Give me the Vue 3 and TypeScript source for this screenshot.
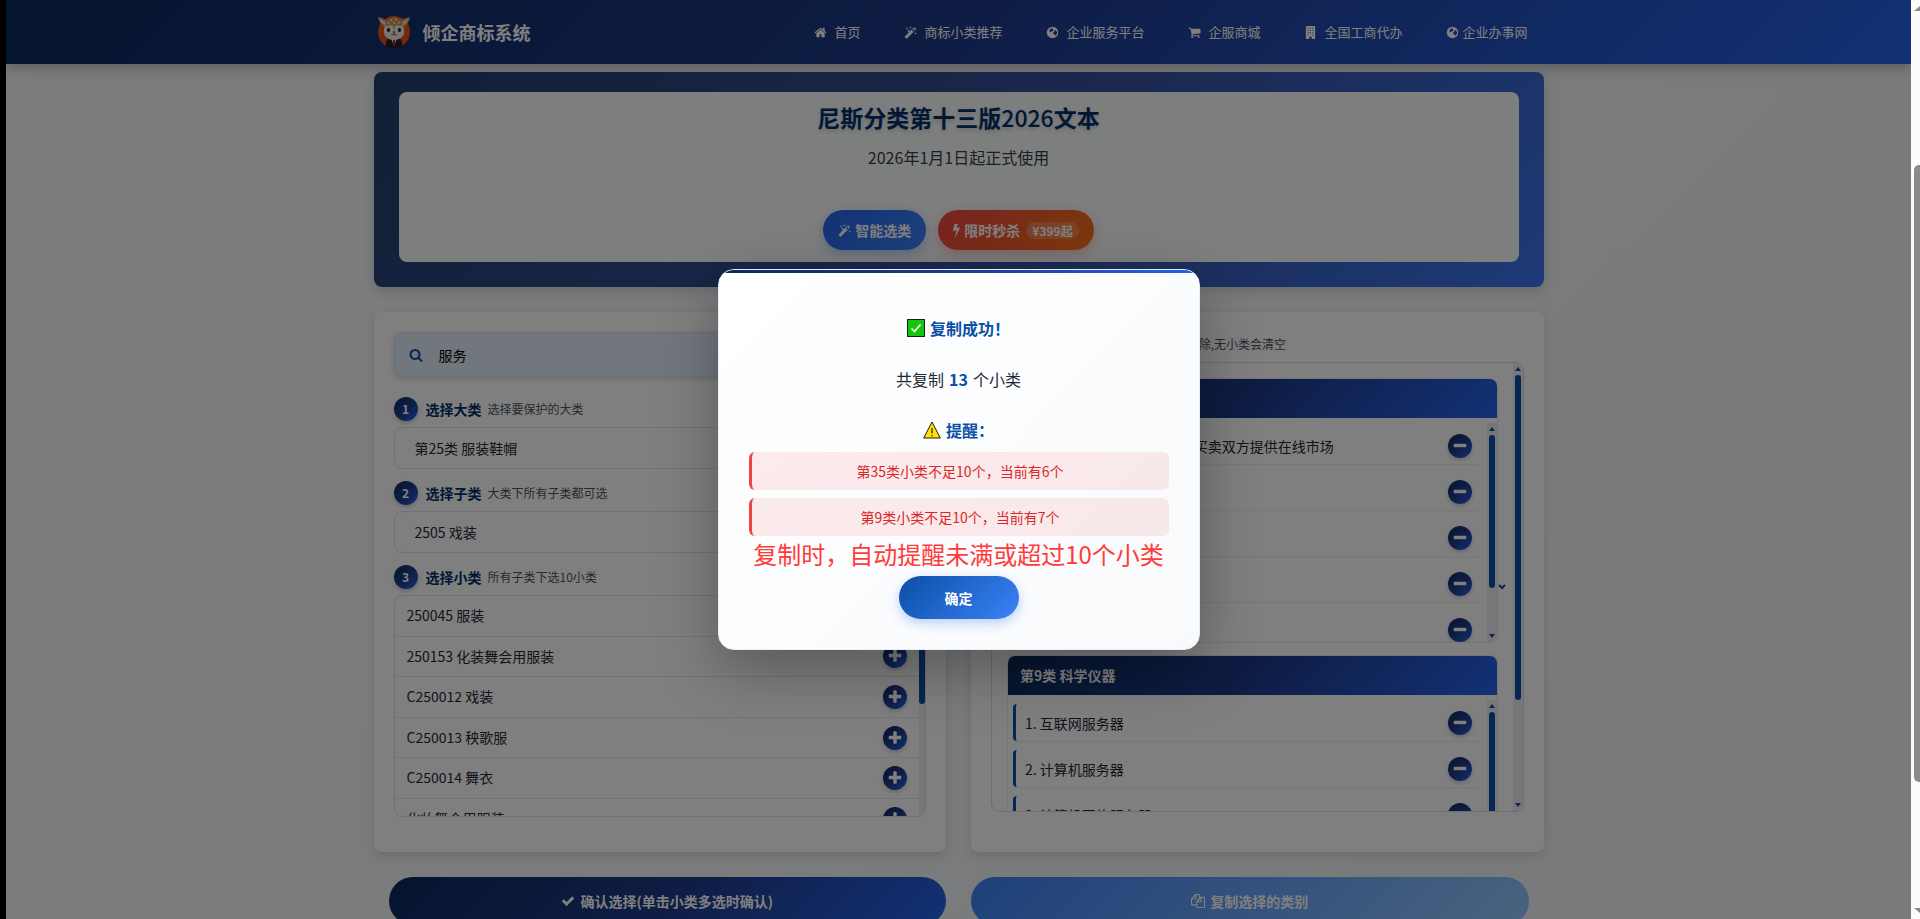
<script setup lang="ts">
import { ref } from 'vue'

interface Glyph {
  box: string
  d: string
}

const glyphs: Record<string, Glyph> = {
  home: {
    box: '0 0 1792 1792',
    d: 'M1472 992v480q0 26-19 45t-45 19h-384v-384h-256v384h-384q-26 0-45-19t-19-45v-480q0-1 .5-3t.5-3l575-474 575 474q1 2 1 6zm223-69l-62 74q-8 9-21 11h-3q-13 0-21-7l-692-577-692 577q-12 8-24 7-13-2-21-11l-62-74q-8-10-7-23.5t11-21.5l719-599q32-26 76-26t76 26l244 204v-195q0-14 9-23t23-9h192q14 0 23 9t9 23v408l219 182q10 8 11 21.5t-7 23.5z',
  },
  wand: {
    box: '0 0 14 14',
    d: 'M.9 11.200L10.400 1.700Q10.900 1.300 11.400 1.700L12.700 3Q13.100 3.500 12.700 4L3.200 13.500Q2.700 13.900 2.200 13.500L.9 12.200Q.5 11.700 .9 11.200zM8.600 5L9.700 6.100L11.700 4.100L10.400 2.800zM3.200 1l.4 1.100 1.100.4-1.100.4-.4 1.100-.4-1.100-1.100-.4 1.100-.4zM7 0l.4 1 1 .4-1 .4-.4 1-.4-1-1-.4 1-.4zM12.600 6.600l.4 1 1 .4-1 .4-.4 1-.4-1-1-.4 1-.4zM5 3.600l.5 1.300 1.300.4-1.300.5-.5 1.300-.5-1.300-1.300-.5 1.300-.4z',
  },
  globe: {
    box: '0 0 14 14',
    d: 'M7 .8a6.200 6.200 0 1 1 0 12.400a6.200 6.200 0 0 1 0-12.400zM5.600 2.600L4 4L3.800 5.600L5 6.800L6 6L7.400 5.400L8 4L7.200 2.800zM9.400 4.400L9 6L7.600 7.200L8.400 9L9.800 9.400L10.400 10.400L11.600 8.600L12 6.400L10.800 5.200z',
  },
  cart: {
    box: '0 0 1792 1792',
    d: 'M704 1536q0 52-38 90t-90 38-90-38-38-90 38-90 90-38 90 38 38 90zm896 0q0 52-38 90t-90 38-90-38-38-90 38-90 90-38 90 38 38 90zm128-1088v512q0 24-16.5 42.5t-40.5 21.5l-1044 122q13 60 13 70 0 16-24 64h920q26 0 45 19t19 45-19 45-45 19h-1024q-26 0-45-19t-19-45q0-11 8-31.5t16-36 21.5-40 15.5-29.5l-177-823h-204q-26 0-45-19t-19-45 19-45 45-19h256q16 0 28.5 6.5t19.5 15.5 13 24.5 8 26 5.5 29.5 4.5 26h1201q26 0 45 19t19 45z',
  },
  building: {
    box: '0 0 14 14',
    d: 'M2.5 0H11.5Q12 0 12 .5V13.5Q12 14 11.5 14H8.2V11.6H5.8V14H2.500Q2 14 2 13.500V.5Q2 0 2.500 0zM4 2V3H5V2zM6.500 2V3H7.500V2zM9 2V3H10V2zM4 4.400V5.400H5V4.400zM6.500 4.400V5.400H7.500V4.400zM9 4.400V5.400H10V4.400zM4 6.800V7.800H5V6.800zM6.500 6.800V7.800H7.500V6.800zM9 6.800V7.800H10V6.800zM4 9.200V10.200H5V9.200zM9 9.200V10.200H10V9.200z',
  },
  search: {
    box: '0 0 1792 1792',
    d: 'M1216 832q0-185-131.5-316.5t-316.5-131.5-316.5 131.5-131.5 316.5 131.5 316.5 316.5 131.5 316.5-131.5 131.5-316.5zm512 832q0 52-38 90t-90 38q-54 0-90-38l-343-342q-179 124-399 124-143 0-273.5-55.500t-225-150-150-225-55.500-273.500 55.500-273.500 150-225 225-150 273.500-55.500 273.500 55.500 225 150 150 225 55.500 273.500q0 220-124 399l343 343q37 37 37 90z',
  },
  plus: {
    box: '0 0 1792 1792',
    d: 'M1600 736v192q0 40-28 68t-68 28h-416v416q0 40-28 68t-68 28h-192q-40 0-68-28t-28-68v-416h-416q-40 0-68-28t-28-68v-192q0-40 28-68t68-28h416v-416q0-40 28-68t68-28h192q40 0 68 28t28 68v416h416q40 0 68 28t28 68z',
  },
  minus: {
    box: '0 0 1792 1792',
    d: 'M1600 736v192q0 40-28 68t-68 28h-1216q-40 0-68-28t-28-68v-192q0-40 28-68t68-28h1216q40 0 68 28t28 68z',
  },
  check: {
    box: '0 0 1792 1792',
    d: 'M1671 566q0 40-28 68l-724 724-136 136q-28 28-68 28t-68-28l-136-136-362-362q-28-28-28-68t28-68l136-136q28-28 68-28t68 28l294 295 656-657q28-28 68-28t68 28l136 136q28 28 28 68z',
  },
  bolt: {
    box: '448 0 896 1792',
    d: 'M1333 566q18 20 7 44l-540 1157q-13 25-42 25-4 0-14-2-17-5-25.500-19t-4.500-30l197-808-406 101q-4 1-12 1-18 0-31-11-18-15-13-39l201-825q4-14 16-23t28-9h328q19 0 32 12.500t13 29.500q0 8-5 18l-171 463 396-98q8-2 12-2 19 0 34 15z',
  },
  copy: {
    box: '0 0 16 16',
    d: 'M5.200 0H9.400Q10 0 10 .6V3H15.400Q16 3 16 3.600V15.400Q16 16 15.400 16H6.600Q6 16 6 15.400V13H.6Q0 13 0 12.400V5.200zM5 2L2 5H5zM6.200 1.200V5.600Q6.200 6.200 5.600 6.200H1.200V11.800H6V8.200L8.800 5.200V1.200zM11 5.200L8.200 8.200H11zM12.200 4.200V8.800Q12.200 9.400 11.600 9.400H7.200V14.800H14.800V4.200z',
  },
}

const nav = [
  { icon: 'home', label: '首页' },
  { icon: 'wand', label: '商标小类推荐' },
  { icon: 'globe', label: '企业服务平台' },
  { icon: 'cart', label: '企服商城' },
  { icon: 'building', label: '全国工商代办' },
  { icon: 'globe', label: '企业办事网', tight: true },
]

const keyword = ref('服务')

const steps = [
  { no: 1, title: '选择大类', hint: '选择要保护的大类', value: '第25类 服装鞋帽' },
  { no: 2, title: '选择子类', hint: '大类下所有子类都可选', value: '2505 戏装' },
]

const goods = [
  '250045 服装',
  '250153 化装舞会用服装',
  'C250012 戏装',
  'C250013 秧歌服',
  'C250014 舞衣',
  '化妆舞会用服装',
]

const groups = [
  {
    title: '第35类 广告销售',
    thumb: 'thumb-a',
    items: [
      '通过互联网为商品和服务买卖双方提供在线市场',
      '替他人推销',
      '市场营销',
      '广告宣传',
      '商业管理辅助',
    ],
  },
  {
    title: '第9类 科学仪器',
    thumb: 'thumb-b',
    items: ['互联网服务器', '计算机服务器', '计算机网络服务器'],
  },
]

const warnings = ['第35类小类不足10个，当前有6个', '第9类小类不足10个，当前有7个']
</script>

<template>
  <div class="screen">
    <div class="page">
      <header class="topbar">
        <div class="wrap topbar-inner">
          <div class="brand">
            <svg class="logo" viewBox="0 0 32 32" aria-hidden="true">
              <circle cx="16" cy="16" r="16" fill="#e8501c" />
              <path d="M0 1Q6 2 10 6L7 11Q1 8 0 1zM32 1Q26 2 22 6L25 11Q31 8 32 1z" fill="#d9a06a" />
              <path d="M1.500 3Q5 4 8 7L7 9Q3 7 1.500 3zM30.500 3Q27 4 24 7L25 9Q29 7 30.500 3z" fill="#f8e4d2" />
              <path d="M8 31Q7 24 11 22H21Q25 24 24 31Q16 34 8 31z" fill="#20222c" />
              <path d="M13 22L16 30L19 22z" fill="#fff" />
              <path d="M15 24H17L17.500 28L16 30L14.500 28z" fill="#c8202c" />
              <path d="M16 2Q24 2 25 10Q28 17 24 21Q21 24 16 24Q11 24 8 21Q4 17 7 10Q8 2 16 2z" fill="#f4e9df" />
              <path d="M16 1Q24 2 25 9Q22 11 19 9Q17 9 16 14Q15 9 13 9Q10 11 7 9Q8 2 16 1z" fill="#d39455" />
              <g fill="#fdeed8">
                <circle cx="13" cy="4" r="1" />
                <circle cx="18" cy="3.500" r="1" />
                <circle cx="16" cy="7" r="1" />
                <circle cx="21" cy="6.500" r="1" />
                <circle cx="10.500" cy="7" r="1" />
              </g>
              <ellipse cx="10.500" cy="14" rx="1.600" ry="2" fill="#16161c" />
              <ellipse cx="21.500" cy="14" rx="1.600" ry="2" fill="#16161c" />
              <path d="M14.500 15.500H17.500L16 17.500z" fill="#2a1c1c" />
              <path d="M13.500 18.500Q15 19.500 16 18Q17 19.500 18.500 18.500" fill="none" stroke="#2a1c1c" stroke-width=".8" />
            </svg>
            <span>倾企商标系统</span>
          </div>
          <nav class="nav">
            <a v-for="n in nav" :key="n.label" href="#" :class="{ tight: n.tight }">
              <svg class="nav-icon" :viewBox="glyphs[n.icon].box" aria-hidden="true">
                <path :d="glyphs[n.icon].d" fill-rule="evenodd" />
              </svg>
              {{ n.label }}
            </a>
          </nav>
        </div>
      </header>

      <main class="wrap">
        <section class="banner">
          <div class="banner-inner">
            <h1>尼斯分类第十三版<span>2026</span>文本</h1>
            <p>2026年1月1日起正式使用</p>
            <div class="banner-actions">
              <button type="button" class="pill blue">
                <svg class="pill-icon" :viewBox="glyphs.wand.box" aria-hidden="true">
                  <path :d="glyphs.wand.d" fill-rule="evenodd" />
                </svg>
                智能选类
              </button>
              <button type="button" class="pill red">
                <svg class="bolt-icon" :viewBox="glyphs.bolt.box" aria-hidden="true">
                  <path :d="glyphs.bolt.d" />
                </svg>
                限时秒杀
                <span class="price">¥399起</span>
              </button>
            </div>
          </div>
        </section>

        <div class="columns">
          <section class="card">
            <label class="search">
              <svg class="search-icon" :viewBox="glyphs.search.box" aria-hidden="true">
                <path :d="glyphs.search.d" />
              </svg>
              <input v-model="keyword" type="text" aria-label="搜索" />
            </label>
            <div v-for="s in steps" :key="s.no" class="step">
              <h2 class="step-head">
                <span class="num">{{ s.no }}</span>{{ s.title }}<small>{{ s.hint }}</small>
              </h2>
              <div class="choice">{{ s.value }}</div>
            </div>
            <div class="step">
              <h2 class="step-head">
                <span class="num">3</span>选择小类<small>所有子类下选10小类</small>
              </h2>
              <div class="goods">
                <ul>
                  <li v-for="g in goods" :key="g">
                    <span>{{ g }}</span>
                    <button type="button" class="round" aria-label="添加">
                      <svg :viewBox="glyphs.plus.box" aria-hidden="true"><path :d="glyphs.plus.d" /></svg>
                    </button>
                  </li>
                </ul>
                <div class="goods-bar"><i></i></div>
              </div>
            </div>
          </section>

          <section class="card">
            <h2 class="step-head">
              <span class="num">4</span>已选类别<small>点击小类右侧 [-] 可删除,无小类会清空</small>
            </h2>
            <div class="picked">
              <div class="picked-list">
                <article v-for="g in groups" :key="g.title" class="group">
                  <h3>{{ g.title }}</h3>
                  <div class="group-body">
                    <ol>
                      <li v-for="(t, i) in g.items" :key="t">
                        <span>{{ i + 1 }}. {{ t }}</span>
                        <button type="button" class="round" aria-label="删除">
                          <svg :viewBox="glyphs.minus.box" aria-hidden="true"><path :d="glyphs.minus.d" /></svg>
                        </button>
                      </li>
                    </ol>
                    <div class="bar">
                      <b class="up"></b>
                      <i :class="g.thumb"></i>
                      <b class="down"></b>
                    </div>
                  </div>
                </article>
              </div>
              <svg class="caret" viewBox="0 0 8 6" aria-hidden="true">
                <path d="M1 1L4 4L7 1" fill="none" stroke="#0b4fa6" stroke-width="2" />
              </svg>
              <div class="bar">
                <b class="up"></b>
                <i class="thumb-outer"></i>
                <b class="down"></b>
              </div>
            </div>
          </section>
        </div>

        <div class="footer-actions">
          <button type="button" class="confirm">
            <svg class="action-icon" :viewBox="glyphs.check.box" aria-hidden="true"><path :d="glyphs.check.d" /></svg>
            确认选择(单击小类多选时确认)
          </button>
          <button type="button" class="copy">
            <svg class="action-icon" :viewBox="glyphs.copy.box" aria-hidden="true">
              <path :d="glyphs.copy.d" fill-rule="evenodd" />
            </svg>
            复制选择的类别
          </button>
        </div>
      </main>

      <div class="overlay">
        <div class="modal" role="dialog" aria-modal="true" aria-labelledby="modal-title">
          <h2 id="modal-title" class="modal-line strong">
            <svg class="emoji" viewBox="0 0 18 18" aria-hidden="true">
              <rect x=".5" y=".5" width="17" height="17" fill="#16c60c" stroke="#1c1c1c" />
              <path d="M4.500 9.500L7.500 12.500L13.500 5.500" fill="none" stroke="#fff" stroke-width="1.600" />
            </svg>
            复制成功！
          </h2>
          <p class="modal-line">共复制 <strong>13</strong> 个小类</p>
          <h3 class="modal-line strong remind">
            <svg class="emoji" viewBox="0 0 18 18" aria-hidden="true">
              <path d="M9 1L17.300 17H.7z" fill="#fde300" stroke="#1c1c1c" stroke-linejoin="round" />
              <path d="M9 7V12.500M9 14V15.200" stroke="#1c1c1c" stroke-width="1.200" />
            </svg>
            提醒：
          </h3>
          <ul class="warnings">
            <li v-for="w in warnings" :key="w">{{ w }}</li>
          </ul>
          <p class="note">复制时，自动提醒未满或超过10个小类</p>
          <button type="button" class="ok">确定</button>
        </div>
      </div>
    </div>

    <div class="window-bar" aria-hidden="true">
      <b class="win-up"></b>
      <i></i>
      <b class="win-down"></b>
    </div>
  </div>
</template>

<style>
body {
  background: #000;
  overflow: hidden;
}
</style>

<style scoped>
* {
  box-sizing: border-box;
  margin: 0;
  padding: 0;
}
ul,
ol {
  list-style: none;
}
button,
input {
  font-family: inherit;
  border: 0;
}
svg {
  fill: currentColor;
  flex: none;
}
.screen {
  --brand: linear-gradient(135deg, #0a2a5c 0%, #1e3a8a 50%, #2563eb 100%);
  --accent: #0b4fa6;
  display: flex;
  height: 100vh;
  padding-left: 6px;
  background: #000;
  font-family: "Noto Sans CJK SC", "Noto Sans", sans-serif;
  font-size: 14px;
  line-height: 20px;
  color: #1f2937;
}
.page {
  position: relative;
  flex: 1;
  min-width: 0;
  overflow: hidden;
  background: linear-gradient(135deg, #f8f9fb, #f1f4f8);
}
.wrap {
  max-width: 1170px;
  margin: 0 auto;
}
.topbar {
  background: var(--brand);
  box-shadow: 0 4px 12px rgba(0, 0, 0, 0.25);
}
.topbar-inner {
  display: flex;
  align-items: center;
  justify-content: space-between;
  height: 64px;
}
.brand {
  display: flex;
  align-items: center;
  gap: 13px;
  padding-left: 4px;
  color: #fff;
  font-size: 18px;
  font-weight: 700;
}
.logo {
  width: 32px;
  height: 32px;
}
.nav {
  display: flex;
  gap: 12px;
}
.nav a {
  display: flex;
  align-items: center;
  gap: 7px;
  padding: 0 16px;
  color: #fff;
  font-size: 13px;
  text-decoration: none;
  white-space: nowrap;
}
.nav a.tight {
  gap: 3px;
}
.nav-icon {
  width: 13px;
  height: 13px;
}
.banner {
  margin-top: 8px;
  padding: 20px 25px 25px;
  border-radius: 8px;
  background: linear-gradient(135deg, #223f6c, #354e96 50%, #3b73ed);
  box-shadow: 0 4px 12px rgba(0, 0, 0, 0.15);
}
.banner-inner {
  padding: 8px 20px 12px;
  border-radius: 8px;
  background: #fbfcfd;
  text-align: center;
}
h1 {
  font-size: 23px;
  line-height: 34px;
  color: #00306a;
  text-shadow: 0 2px 4px rgba(0, 0, 0, 0.2);
}
h1 span {
  font-weight: 500;
}
.banner p {
  margin-top: 10px;
  font-size: 16px;
  line-height: 26px;
  color: #374151;
}
.banner-actions {
  display: flex;
  justify-content: center;
  gap: 12px;
  margin-top: 40px;
}
.pill {
  display: flex;
  align-items: center;
  gap: 4px;
  height: 40px;
  padding: 0 15px;
  border-radius: 20px;
  color: #fff;
  font-size: 14px;
  font-weight: 700;
}
.blue {
  background: linear-gradient(135deg, #2563eb, #3b82f6);
  box-shadow: 0 4px 12px rgba(37, 99, 235, 0.3);
}
.red {
  background: linear-gradient(135deg, #ef4444, #f97316);
  box-shadow: 0 4px 12px rgba(239, 68, 68, 0.3);
}
.pill-icon {
  width: 13px;
  height: 13px;
}
.bolt-icon {
  width: 7px;
  height: 14px;
}
.price {
  margin-left: 2px;
  padding: 0 6px;
  border-radius: 10px;
  background: rgba(255, 255, 255, 0.2);
  font-size: 12px;
}
.columns {
  display: grid;
  grid-template-columns: 1fr 1fr;
  gap: 25px;
  margin-top: 25px;
}
.card {
  min-width: 0;
  padding: 20px 20px 35px;
  border-radius: 8px;
  background: #fff;
  box-shadow: 0 4px 12px rgba(0, 0, 0, 0.12);
}
.search {
  display: flex;
  align-items: center;
  gap: 16px;
  height: 45px;
  margin-bottom: 20px;
  padding: 0 14px;
  border: 1px solid #d9e4f2;
  border-radius: 8px;
  background: #e4eefc;
  box-shadow: 0 2px 6px rgba(0, 0, 0, 0.15);
  color: var(--accent);
}
.search-icon {
  width: 14px;
  height: 14px;
}
.search input {
  flex: 1;
  min-width: 0;
  background: none;
  color: #000;
  font-size: 14px;
}
.step + .step {
  margin-top: 12px;
}
.step-head {
  display: flex;
  align-items: center;
  height: 24px;
  margin-bottom: 6px;
  color: #00306a;
  font-size: 14px;
  font-weight: 700;
}
.num {
  display: grid;
  place-items: center;
  width: 24px;
  height: 24px;
  margin-right: 8px;
  border-radius: 50%;
  background: var(--brand);
  box-shadow: 0 2px 4px rgba(0, 0, 0, 0.2);
  color: #fff;
  font-size: 12px;
}
.step-head small {
  margin-left: 6px;
  color: #4b5563;
  font-size: 12px;
  font-weight: 400;
}
.choice {
  padding: 10px 20px;
  border: 1px solid #dde3ee;
  border-radius: 8px;
}
.goods {
  display: flex;
  height: 222px;
  border: 1px solid #e2e2e6;
  border-radius: 8px;
  overflow: hidden;
}
.goods ul {
  flex: 1;
}
.goods li {
  display: flex;
  align-items: center;
  justify-content: space-between;
  padding: 0 12px;
  border-bottom: 1px solid #e6e8ec;
}
.goods li span {
  padding: 10px 0;
  line-height: 1.4;
}
.round {
  display: grid;
  place-items: center;
  width: 24px;
  height: 24px;
  border-radius: 50%;
  background: var(--brand);
  box-shadow: 0 2px 4px rgba(0, 0, 0, 0.2);
  color: #fff;
}
.round svg {
  width: 16px;
  height: 16px;
}
.goods-bar {
  width: 6px;
  background: #eee;
}
.goods-bar i {
  display: block;
  height: 108px;
  border-radius: 3px;
  background: var(--accent);
}
.picked {
  position: relative;
  display: flex;
  height: 450px;
  border: 1px solid #dcdce0;
  border-radius: 8px;
  overflow: hidden;
}
.picked-list {
  flex: 1;
  padding: 15px;
}
.group {
  border: 1px solid #e9ebef;
  border-radius: 8px;
  overflow: hidden;
}
.group + .group {
  margin-top: 12px;
}
h3 {
  font-size: 14px;
}
.group h3 {
  padding: 9px 12px 10px;
  background: var(--brand);
  color: #fff;
}
.group-body {
  display: flex;
  height: 224px;
  padding-top: 5px;
}
.group ol {
  flex: 1;
  padding: 4px 5px;
  overflow: hidden;
}
.group li {
  display: flex;
  align-items: center;
  justify-content: space-between;
  height: 37px;
  margin-bottom: 9px;
  padding: 0 10px 0 9px;
  border-left: 3px solid var(--accent);
  border-radius: 4px;
  box-shadow: 0 1px 2px rgba(0, 0, 0, 0.08);
}
.bar {
  display: flex;
  flex-direction: column;
  align-items: center;
  width: 10px;
  padding: 4px 0;
  background: #efefef;
}
.bar i {
  width: 6px;
  margin-top: 4px;
  border-radius: 3px;
  background: var(--accent);
}
.bar b {
  border: 3px solid transparent;
}
.bar .up {
  border-top: 0;
  border-bottom: 4px solid var(--accent);
}
.bar .down {
  margin-top: auto;
  border-bottom: 0;
  border-top: 4px solid var(--accent);
}
.thumb-a {
  height: 153px;
}
.thumb-b {
  height: 140px;
}
.thumb-outer {
  height: 325px;
}
.caret {
  position: absolute;
  right: 17px;
  top: 221px;
  width: 8px;
  height: 6px;
}
.footer-actions {
  display: grid;
  grid-template-columns: 1fr 1fr;
  gap: 25px;
  margin-top: 25px;
  padding: 0 15px;
}
.footer-actions button {
  display: flex;
  align-items: center;
  justify-content: center;
  gap: 5px;
  height: 48px;
  border-radius: 24px;
  color: #fff;
  font-size: 14px;
  font-weight: 700;
}
.confirm {
  background: var(--brand);
}
.copy {
  background: linear-gradient(135deg, #3b82f6, #93c5fd);
}
.action-icon {
  width: 14px;
  height: 14px;
}
.overlay {
  position: absolute;
  inset: 0;
  display: grid;
  place-items: center;
  background: rgba(0, 0, 0, 0.5);
}
.modal {
  position: relative;
  display: flex;
  flex-direction: column;
  width: 482px;
  padding: 45px 30px 30px;
  border: 1px solid #e6eefb;
  border-radius: 16px;
  background: linear-gradient(135deg, #fff, #f8fafc);
  box-shadow: 0 20px 60px rgba(0, 0, 0, 0.3);
  overflow: hidden;
  text-align: center;
}
.modal::before {
  content: "";
  position: absolute;
  inset: 0 0 auto;
  height: 3px;
  background: var(--brand);
}
.modal-line {
  display: flex;
  align-items: center;
  justify-content: center;
  gap: 5px;
  margin-bottom: 25px;
  font-size: 16px;
  line-height: 26px;
}
.modal-line strong,
.strong {
  color: var(--accent);
}
.remind {
  margin-bottom: 9px;
}
.emoji {
  width: 18px;
  height: 18px;
}
.warnings {
  display: grid;
  gap: 8px;
}
.warnings li {
  padding: 9px 12px;
  border-left: 3px solid #ef4444;
  border-radius: 6px;
  background: rgba(239, 68, 68, 0.1);
  color: #dc2626;
}
.note {
  margin-bottom: 4px;
  color: #ff3b3b;
  font-size: 24px;
  line-height: 36px;
  white-space: nowrap;
}
.ok {
  align-self: center;
  width: 120px;
  height: 43px;
  border-radius: 22px;
  background: linear-gradient(135deg, #0b4fa6, #3b82f6);
  box-shadow: 0 4px 12px rgba(37, 99, 235, 0.3);
  color: #fff;
  font-size: 14px;
  font-weight: 700;
}
.window-bar {
  display: flex;
  flex-direction: column;
  align-items: flex-end;
  width: 9px;
  padding: 6px 0;
  background: #fcfcfc;
  overflow: hidden;
}
.window-bar i {
  width: 6px;
  height: 68%;
  margin-top: 154px;
  border-radius: 5px 0 0 5px;
  background: #8b8b8b;
}
.window-bar b {
  width: 6px;
  height: 5px;
  background: #8b8b8b;
}
.win-up {
  clip-path: polygon(100% 0, 100% 100%, 0 100%);
}
.win-down {
  margin-top: auto;
  clip-path: polygon(0 0, 100% 0, 100% 100%);
}
</style>
